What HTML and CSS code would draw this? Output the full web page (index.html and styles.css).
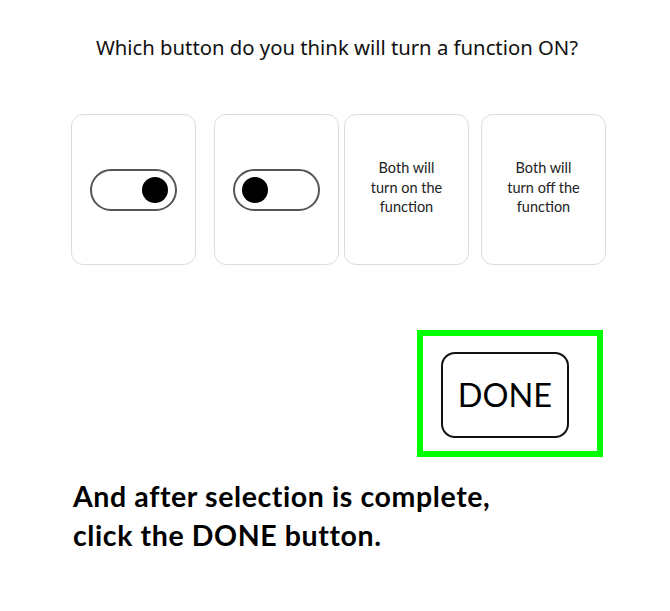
FILE: index.html
```html
<!DOCTYPE html>
<html>
<head>
<meta charset="utf-8">
<link rel="stylesheet" href="styles.css">
</head>
<body>
<div class="page">
  <h1 class="title">Which button do you think will turn a function ON?</h1>
  <div class="cards">
    <div class="card">
      <div class="toggle toggle-on"><span class="knob"></span></div>
    </div>
    <div class="card card-2">
      <div class="toggle toggle-off"><span class="knob"></span></div>
    </div>
    <div class="card card-3">
      <p class="card-text">Both will<br>turn on the<br>function</p>
    </div>
    <div class="card card-4">
      <p class="card-text">Both will<br>turn off the<br>function</p>
    </div>
  </div>
  <div class="done-row">
    <div class="highlight">
      <div class="done-btn">DONE</div>
    </div>
  </div>
  <p class="instruction">And after selection is complete,<br>click the DONE button.</p>
</div>
</body>
</html>
```
FILE: styles.css
```css
html, body {
  margin: 0;
  padding: 0;
  background: #ffffff;
}
.page {
  width: 670px;
  height: 611px;
  position: relative;
  overflow: hidden;
}
.title {
  margin: 0;
  padding-top: 33px;
  font-family: "Noto Sans", sans-serif;
  font-weight: 400;
  font-size: 20.3px;
  line-height: 28px;
  color: #111;
  text-align: center;
  padding-left: 4px;
}
.cards {
  display: flex;
  padding-left: 71px;
  margin-top: 53px;
}
.card {
  box-sizing: border-box;
  width: 125px;
  height: 151px;
  border: 1px solid #dcdcdc;
  border-radius: 12px;
  display: flex;
  align-items: center;
  justify-content: center;
}
.card-2 { margin-left: 18px; }
.card-3 { margin-left: 5px; }
.card-4 { margin-left: 12px; }
.toggle {
  box-sizing: border-box;
  width: 87px;
  height: 42px;
  border: 2px solid #555;
  border-radius: 21px;
  display: flex;
  align-items: center;
  padding: 0 7px;
}
.toggle-on { justify-content: flex-end; }
.toggle-off { justify-content: flex-start; }
.knob {
  width: 26px;
  height: 26px;
  border-radius: 50%;
  background: #000;
}
.card-text {
  margin: 0;
  font-family: "Lato", "Open Sans", sans-serif;
  font-size: 14.5px;
  line-height: 19.5px;
  color: #222;
  text-align: center;
  margin-top: -4px;
}
.done-row {
  display: flex;
  justify-content: flex-end;
  padding-right: 67px;
  margin-top: 65px;
}
.highlight {
  box-sizing: border-box;
  width: 186px;
  height: 127px;
  border: 6px solid #00ff00;
  display: flex;
  align-items: center;
  justify-content: flex-start;
  padding-left: 18px;
}
.done-btn {
  box-sizing: border-box;
  width: 128px;
  height: 86px;
  border: 2px solid #111;
  border-radius: 14px;
  display: flex;
  align-items: center;
  justify-content: center;
  font-family: "Lato", "Open Sans", sans-serif;
  font-size: 32.5px;
  color: #000;
  margin-top: 2px;
}
.instruction {
  margin: 0;
  margin-top: 20px;
  padding-left: 73px;
  font-family: "Lato", "Open Sans", sans-serif;
  font-weight: 700;
  font-size: 28.5px;
  letter-spacing: 0.6px;
  line-height: 39px;
  color: #000;
}
```
